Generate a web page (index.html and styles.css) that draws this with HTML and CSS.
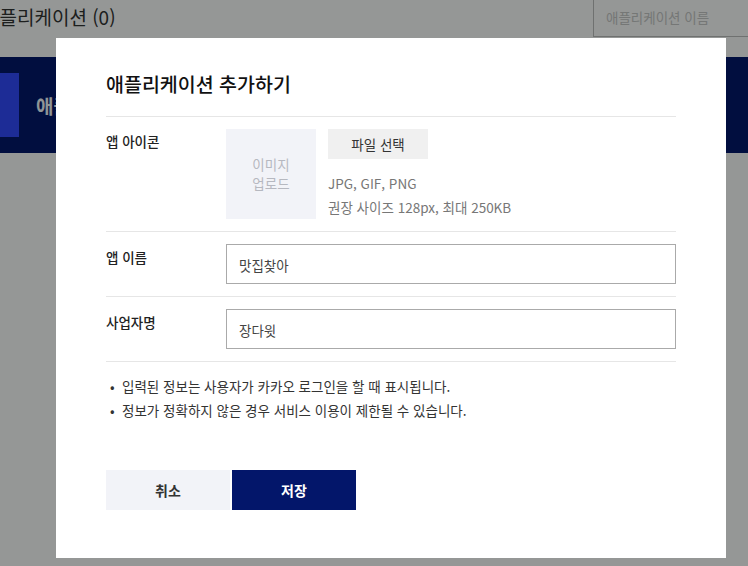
FILE: index.html
```html
<!DOCTYPE html>
<html lang="ko">
<head>
<meta charset="utf-8">
<title>애플리케이션 추가하기</title>
<link rel="stylesheet" href="styles.css">
</head>
<body>
<div class="page">
  <header class="top">
    <h1 class="page-title">애플리케이션 (0)</h1>
    <div class="search">애플리케이션 이름</div>
  </header>
  <section class="band">
    <div class="band-mark"></div>
    <div class="band-text">애플리케이션 관리</div>
  </section>
</div>

<div class="backdrop"></div>

<div class="modal" role="dialog">
  <h2 class="modal-title">애플리케이션 추가하기</h2>

  <div class="row">
    <div class="label">앱 아이콘</div>
    <div class="field icon-field">
      <div class="upload-box">이미지<br>업로드</div>
      <div class="icon-info">
        <button class="file-btn" type="button">파일 선택</button>
        <p class="help">JPG, GIF, PNG<br>권장 사이즈 128px, 최대 250KB</p>
      </div>
    </div>
  </div>

  <div class="row">
    <div class="label label-input">앱 이름</div>
    <div class="field">
      <div class="input">맛집찾아</div>
    </div>
  </div>

  <div class="row">
    <div class="label label-input">사업자명</div>
    <div class="field">
      <div class="input">장다윗</div>
    </div>
  </div>

  <ul class="notes">
    <li>입력된 정보는 사용자가 카카오 로그인을 할 때 표시됩니다.</li>
    <li>정보가 정확하지 않은 경우 서비스 이용이 제한될 수 있습니다.</li>
  </ul>

  <div class="actions">
    <button class="btn btn-cancel" type="button">취소</button>
    <button class="btn btn-save" type="button">저장</button>
  </div>
</div>
</body>
</html>
```

FILE: styles.css
```css
* { box-sizing: border-box; }

html, body {
  margin: 0;
  padding: 0;
  background: #ffffff;
  font-family: "Noto Sans CJK KR", "Noto Sans", sans-serif;
  overflow: hidden;
  height: 100%;
}

.page {
  margin-left: -18px;
  width: 800px;
}

.top {
  display: flex;
  align-items: flex-start;
  justify-content: space-between;
  height: 37px;
}

.page-title {
  margin: 0;
  font-size: 19px;
  font-weight: 400;
  line-height: 34px;
  color: #333;
}

.search {
  margin-top: -2px;
  margin-right: -16px;
  width: 205px;
  height: 39px;
  border: 1px solid #bebebe;
  padding-left: 12px;
  font-size: 13.5px;
  line-height: 36px;
  color: #c8c8c8;
}

.band {
  margin-top: 20px;
  height: 96px;
  background: #03166a;
  display: flex;
  align-items: center;
  gap: 17px;
}

.band-mark {
  width: 37px;
  height: 64px;
  background: #3249ff;
}

.band-text {
  color: #f6fbff;
  font-size: 19px;
  font-weight: 700;
}

.backdrop {
  position: fixed;
  inset: 0;
  background: rgba(0, 4, 2, 0.415);
}

.modal {
  position: absolute;
  left: 56px;
  top: 38px;
  width: 670px;
  background: #fff;
  padding: 32px 50px 48px;
  color: #222;
}

.modal-title {
  margin: 0;
  font-size: 19.5px;
  font-weight: 500;
  line-height: 28px;
  color: #111;
  padding-bottom: 18px;
  border-bottom: 1px solid #e6e6e6;
}

.row {
  display: flex;
  padding: 12px 0;
  border-bottom: 1px solid #e6e6e6;
}

.label {
  width: 120px;
  flex: none;
  font-size: 13.5px;
  font-weight: 500;
  line-height: 24px;
  color: #222;
}

.label-input {
  line-height: 26px;
}

.field {
  flex: 1;
}

.icon-field {
  display: flex;
  gap: 12px;
}

.upload-box {
  width: 90px;
  height: 90px;
  background: #f2f3f8;
  color: #b6b8c0;
  font-size: 13.5px;
  line-height: 19px;
  display: flex;
  align-items: center;
  justify-content: center;
  text-align: center;
}

.icon-info {
  display: flex;
  flex-direction: column;
  align-items: flex-start;
}

.file-btn {
  width: 100px;
  height: 30px;
  border: 0;
  background: #f0f0f0;
  color: #333;
  font-family: inherit;
  font-size: 13.5px;
  padding: 0;
}

.help {
  margin: 12px 0 0;
  font-size: 13.5px;
  line-height: 24px;
  color: #777;
}

.input {
  height: 40px;
  border: 1px solid #aaaaaa;
  padding: 0 12px;
  font-size: 13.5px;
  line-height: 40px;
  color: #444;
}

.notes {
  list-style: none;
  margin: 0;
  padding: 12px 0 0 16px;
  font-size: 13.5px;
  line-height: 24px;
  color: #333;
}

.notes li::before {
  content: "•";
  display: inline-block;
  width: 12px;
  margin-left: -12px;
  color: #333;
}

.actions {
  display: flex;
  gap: 2px;
  margin-top: 48px;
}

.btn {
  width: 124px;
  height: 40px;
  border: 0;
  font-family: inherit;
  font-size: 14px;
  font-weight: 700;
  padding: 0;
}

.btn-cancel {
  background: #f2f3f8;
  color: #333;
}

.btn-save {
  background: #03166a;
  color: #fff;
}
```
